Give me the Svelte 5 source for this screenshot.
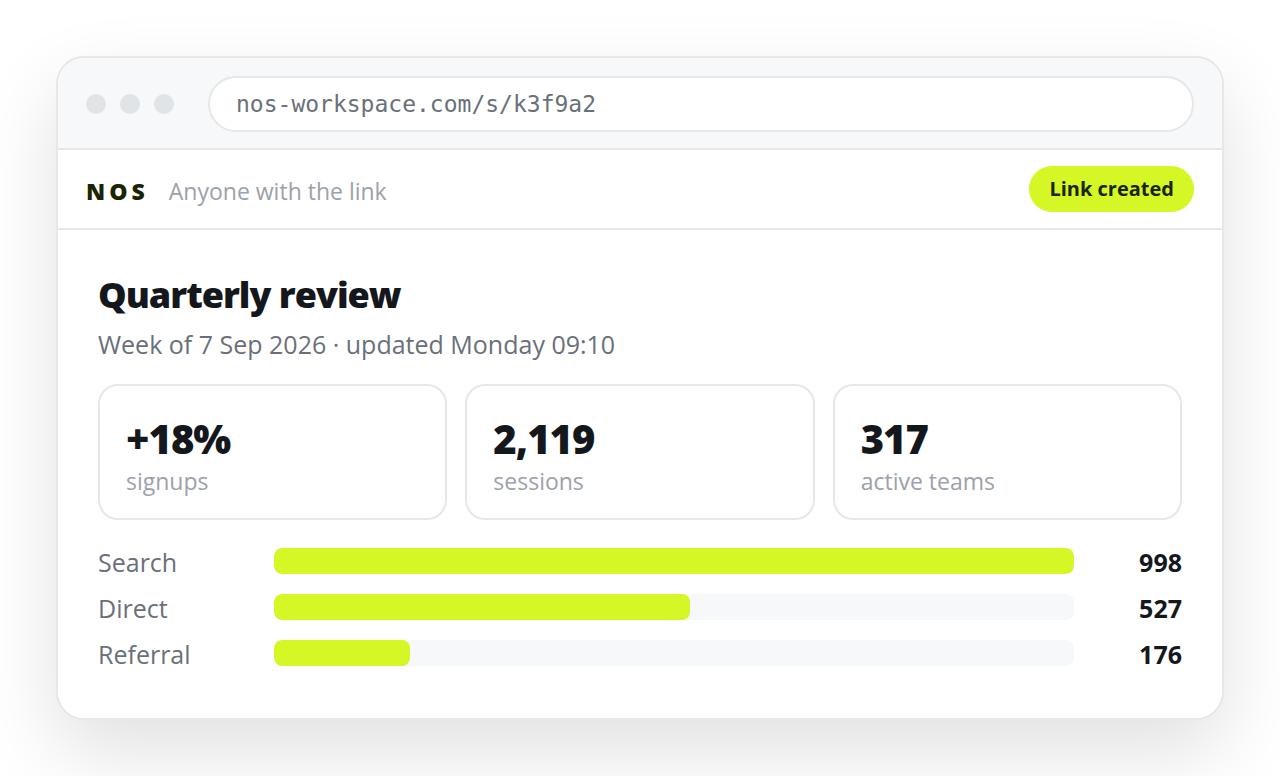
<script lang="ts">
  type Stat = { value: string; label: string };
  type Source = { name: string; count: number; share: number };

  const url = 'nos-workspace.com/s/k3f9a2';

  const stats: Stat[] = [
    { value: '+18%', label: 'signups' },
    { value: '2,119', label: 'sessions' },
    { value: '317', label: 'active teams' },
  ];

  const sources: Source[] = [
    { name: 'Search', count: 998, share: 100 },
    { name: 'Direct', count: 527, share: 52 },
    { name: 'Referral', count: 176, share: 17 },
  ];
</script>

<main class="stage">
  <div class="window">
    <div class="chrome">
      <div class="dots" aria-hidden="true">
        <i></i>
        <i></i>
        <i></i>
      </div>
      <input class="address" type="text" value={url} aria-label="Address" readonly spellcheck="false" />
    </div>

    <header class="share-bar">
      <div class="identity">
        <span class="brand">NOS</span>
        <span class="access">Anyone with the link</span>
      </div>
      <span class="badge" role="status">Link created</span>
    </header>

    <article class="report">
      <h1>Quarterly review</h1>
      <p class="meta">Week of 7 Sep 2026 · updated Monday 09:10</p>

      <div class="stats">
        {#each stats as stat}
          <div class="stat">
            <strong>{stat.value}</strong>
            <span>{stat.label}</span>
          </div>
        {/each}
      </div>

      <div class="sources">
        {#each sources as source}
          <div class="source">
            <span class="name">{source.name}</span>
            <div class="track">
              <div class="fill" style="width: {source.share}%"></div>
            </div>
            <span class="count">{source.count}</span>
          </div>
        {/each}
      </div>
    </article>
  </div>
</main>

<style>
  :global(body) {
    background: #ffffff;
  }

  .stage {
    padding: 56px;
    font-family: 'Segoe UI', 'Open Sans', 'Noto Sans', sans-serif;
    color: #14181d;
  }

  .window {
    overflow: hidden;
    border: 2px solid #e5e7e9;
    border-radius: 28px;
    background: #ffffff;
    box-shadow: 0 32px 80px rgba(0, 0, 0, 0.12);
  }

  .chrome {
    display: flex;
    align-items: center;
    gap: 34px;
    padding: 18px 28px 16px;
    border-bottom: 2px solid #e5e7e9;
    background: #f6f8fa;
  }

  .dots {
    display: flex;
    gap: 14px;
  }

  .dots i {
    width: 20px;
    height: 20px;
    border-radius: 50%;
    background: #e0e4e7;
  }

  .address {
    box-sizing: border-box;
    flex: 1;
    min-width: 0;
    height: 56px;
    padding: 0 26px;
    border: 2px solid #e5e7e9;
    border-radius: 28px;
    outline: 0;
    background: #ffffff;
    color: #69707a;
    font-family: Consolas, 'DejaVu Sans Mono', monospace;
    font-size: 23px;
  }

  .share-bar {
    display: flex;
    align-items: center;
    justify-content: space-between;
    gap: 20px;
    padding: 16px 28px;
    border-bottom: 2px solid #e5e7e9;
  }

  .identity {
    display: flex;
    gap: 20px;
    padding-top: 4px;
    font-size: 23px;
    line-height: 32px;
  }

  .brand {
    color: #1b2400;
    font-weight: 800;
    letter-spacing: 4px;
  }

  .access {
    color: #9ca1aa;
  }

  .badge {
    padding: 0 20px;
    border-radius: 23px;
    background: #d4f725;
    color: #1b2400;
    font-size: 20px;
    font-weight: 700;
    line-height: 46px;
  }

  .report {
    padding: 40px 40px 50px;
  }

  h1 {
    margin: 0;
    font-size: 36px;
    font-weight: 800;
    letter-spacing: -1px;
    line-height: 50px;
  }

  .meta {
    margin: 6px 0 22px;
    color: #69707a;
    font-size: 25px;
    line-height: 36px;
  }

  .stats {
    display: grid;
    grid-template-columns: repeat(3, minmax(0, 1fr));
    gap: 18px;
  }

  .stat {
    display: grid;
    padding: 26px 26px 22px;
    border: 2px solid #e5e7e9;
    border-radius: 20px;
  }

  .stat strong {
    font-size: 40px;
    font-weight: 800;
    letter-spacing: -1px;
    line-height: 54px;
  }

  .stat span {
    color: #9ca1aa;
    font-size: 23px;
    line-height: 30px;
  }

  .sources {
    display: grid;
    gap: 18px;
    margin-top: 28px;
  }

  .source {
    display: grid;
    grid-template-columns: 152px minmax(0, 1fr) 84px;
    align-items: start;
    gap: 24px;
    font-size: 25px;
    line-height: 28px;
  }

  .name {
    color: #69707a;
  }

  .track {
    height: 26px;
    overflow: hidden;
    border-radius: 8px;
    background: #f6f8fa;
  }

  .fill {
    height: 100%;
    border-radius: 8px;
    background: #d4f725;
  }

  .count {
    font-weight: 700;
    text-align: right;
  }
</style>
